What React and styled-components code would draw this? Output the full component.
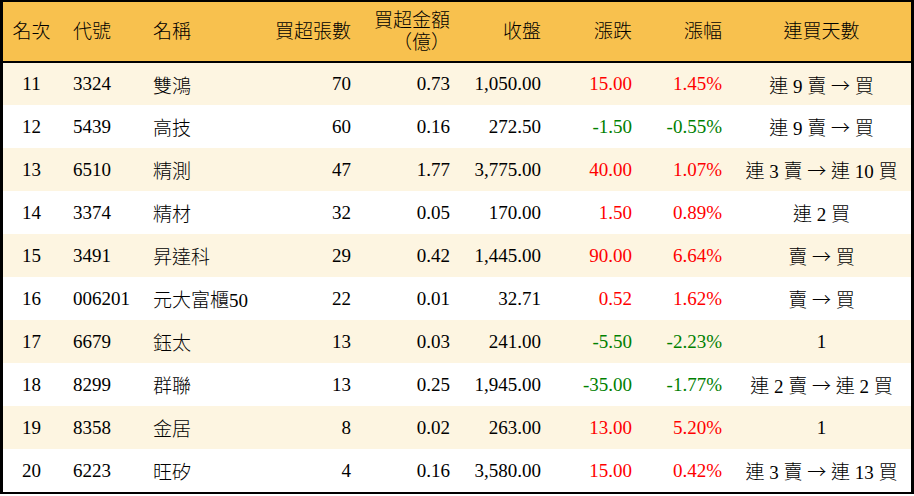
import React from 'react';
import styled, { createGlobalStyle } from 'styled-components';

const GlobalStyle = createGlobalStyle`
  html, body {
    margin: 0;
    padding: 0;
    background: #ffffff;
  }
`;

const Frame = styled.div`
  width: 914px;
  box-sizing: border-box;
  border-top: 2px solid #000;
  border-left: 3px solid #000;
  border-right: 3px solid #000;
  border-bottom: 2px solid #000;
  font-family: "Liberation Serif", "Noto Sans CJK TC", serif;
  font-size: 19px;
  font-weight: 300;
  color: #000;
`;

const Table = styled.table`
  width: 100%;
  border-collapse: collapse;
  table-layout: fixed;
`;

const HeadRow = styled.tr`
  height: 60px;
  background: #f8c14e;
  border-bottom: 2px solid #000;
`;

const HeadCell = styled.th`
  font-weight: 300;
  line-height: 22px;
  padding: 0 ${p => (p.$align === 'right' ? '10px' : '0')} 0
    ${p => (p.$align === 'left' ? '13px' : '0')};
  text-align: ${p => p.$align};
  vertical-align: middle;
  white-space: nowrap;
`;

const Row = styled.tr`
  height: 43px;
  background: ${p => (p.$striped ? '#fdf5e1' : '#ffffff')};
`;

const Cell = styled.td`
  padding: 0 ${p => (p.$align === 'right' ? '10px' : '0')} 0
    ${p => (p.$align === 'left' ? '13px' : '0')};
  text-align: ${p => p.$align};
  vertical-align: middle;
  white-space: nowrap;
  color: ${p => p.$tone || '#000'};
`;

const Arrow = styled.span`
  font-family: "Noto Sans CJK TC", sans-serif;
  font-weight: 300;
`;

const columns = [
  { key: 'rank', label: '名次', width: 57, align: 'center' },
  { key: 'code', label: '代號', width: 80, align: 'left' },
  { key: 'name', label: '名稱', width: 120, align: 'left' },
  { key: 'lots', label: '買超張數', width: 101, align: 'right' },
  { key: 'amount', label: ['買超金額', '（億）'], width: 99, align: 'right' },
  { key: 'close', label: '收盤', width: 91, align: 'right' },
  { key: 'change', label: '漲跌', width: 91, align: 'right', toned: true },
  { key: 'pct', label: '漲幅', width: 90, align: 'right', toned: true },
  { key: 'streak', label: '連買天數', width: 179, align: 'center' },
];

const rows = [
  ['11', '3324', '雙鴻', '70', '0.73', '1,050.00', '15.00', '1.45%', '連 9 賣 → 買'],
  ['12', '5439', '高技', '60', '0.16', '272.50', '-1.50', '-0.55%', '連 9 賣 → 買'],
  ['13', '6510', '精測', '47', '1.77', '3,775.00', '40.00', '1.07%', '連 3 賣 → 連 10 買'],
  ['14', '3374', '精材', '32', '0.05', '170.00', '1.50', '0.89%', '連 2 買'],
  ['15', '3491', '昇達科', '29', '0.42', '1,445.00', '90.00', '6.64%', '賣 → 買'],
  ['16', '006201', '元大富櫃50', '22', '0.01', '32.71', '0.52', '1.62%', '賣 → 買'],
  ['17', '6679', '鈺太', '13', '0.03', '241.00', '-5.50', '-2.23%', '1'],
  ['18', '8299', '群聯', '13', '0.25', '1,945.00', '-35.00', '-1.77%', '連 2 賣 → 連 2 買'],
  ['19', '8358', '金居', '8', '0.02', '263.00', '13.00', '5.20%', '1'],
  ['20', '6223', '旺矽', '4', '0.16', '3,580.00', '15.00', '0.42%', '連 3 賣 → 連 13 買'],
];

const toneOf = value => (value.startsWith('-') ? '#008000' : '#ff0000');

// the streak text keeps its arrow, drawn in the wide CJK glyph
const Streak = ({ text }) => {
  const parts = text.split('→');
  return parts.map((part, i) => (
    <React.Fragment key={i}>
      {i > 0 && <Arrow>→</Arrow>}
      {part}
    </React.Fragment>
  ));
};

export default function App() {
  return (
    <>
      <GlobalStyle />
      <Frame>
        <Table>
          <colgroup>
            {columns.map(col => (
              <col key={col.key} style={{ width: col.width }} />
            ))}
          </colgroup>
          <thead>
            <HeadRow>
              {columns.map(col => (
                <HeadCell key={col.key} $align={col.align}>
                  {Array.isArray(col.label)
                    ? col.label.map((line, i) => (
                        <React.Fragment key={line}>
                          {i > 0 && <br />}
                          {line}
                        </React.Fragment>
                      ))
                    : col.label}
                </HeadCell>
              ))}
            </HeadRow>
          </thead>
          <tbody>
            {rows.map((row, r) => (
              <Row key={row[0]} $striped={r % 2 === 0}>
                {row.map((value, i) => (
                  <Cell
                    key={columns[i].key}
                    $align={columns[i].align}
                    $tone={columns[i].toned ? toneOf(value) : undefined}
                  >
                    {columns[i].key === 'streak' ? <Streak text={value} /> : value}
                  </Cell>
                ))}
              </Row>
            ))}
          </tbody>
        </Table>
      </Frame>
    </>
  );
}
